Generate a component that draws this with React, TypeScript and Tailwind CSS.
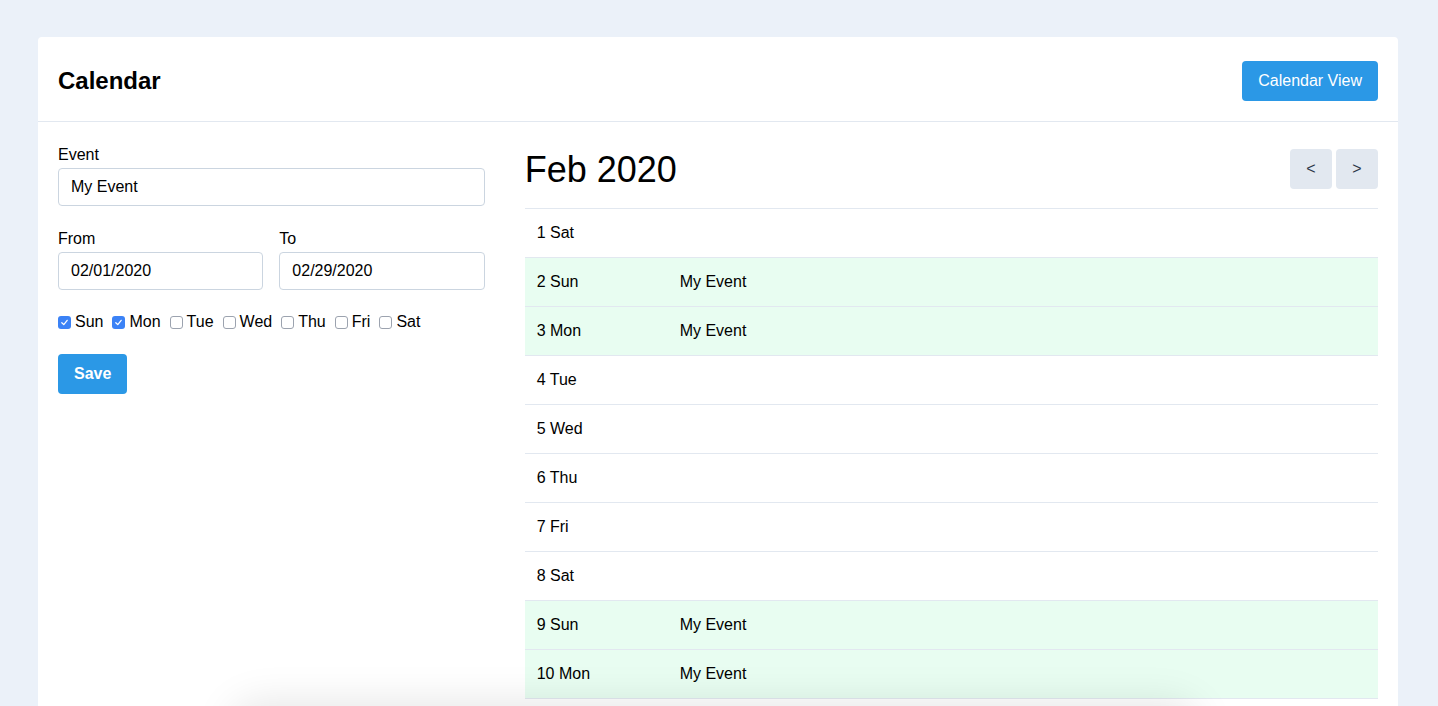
import React from "react";

const days = [
  { d: "1 Sat", e: "" },
  { d: "2 Sun", e: "My Event" },
  { d: "3 Mon", e: "My Event" },
  { d: "4 Tue", e: "" },
  { d: "5 Wed", e: "" },
  { d: "6 Thu", e: "" },
  { d: "7 Fri", e: "" },
  { d: "8 Sat", e: "" },
  { d: "9 Sun", e: "My Event" },
  { d: "10 Mon", e: "My Event" },
  { d: "11 Tue", e: "" },
];

const week = [
  { n: "Sun", c: true },
  { n: "Mon", c: true },
  { n: "Tue", c: false },
  { n: "Wed", c: false },
  { n: "Thu", c: false },
  { n: "Fri", c: false },
  { n: "Sat", c: false },
];

function Check({ checked }: { checked: boolean }) {
  return checked ? (
    <span className="inline-flex h-[13px] w-[13px] items-center justify-center rounded-[3px] bg-[#3b82f6]">
      <svg width="9" height="9" viewBox="0 0 10 10">
        <path d="M2 5.2 L4.2 7.4 L8 2.6" fill="none" stroke="white" strokeWidth="1.4" strokeLinecap="round" strokeLinejoin="round" />
      </svg>
    </span>
  ) : (
    <span className="inline-block h-[13px] w-[13px] rounded-[3px] border border-[#9ca3af] bg-white" />
  );
}

export default function App() {
  return (
    <div
      className="relative min-h-[706px] overflow-hidden bg-[#ebf1f9] pt-[37px] text-black"
      style={{ fontFamily: "'Liberation Sans', Arial, sans-serif" }}
    >
      <div className="ml-[38px] w-[1360px] rounded-[4px] bg-white">
        <div className="flex items-center justify-between border-b border-[#e2e8f0] px-5 pb-5 pt-6">
          <h1 className="text-[24px] font-bold leading-[32px]">Calendar</h1>
          <button className="h-10 rounded-[4px] bg-[#2b98e6] px-4 text-[16px] text-white">
            Calendar View
          </button>
        </div>
        <div className="grid grid-cols-[1fr_2fr] gap-10 px-5 pt-[21px]">
          <div>
            <label className="block text-[16px] leading-[24px]">Event</label>
            <div className="mt-[1px] flex h-[38px] items-center rounded-[4px] border border-[#cbd5e0] px-3 text-[16px]">
              My Event
            </div>
            <div className="mt-[21px] grid grid-cols-2 gap-4">
              <div>
                <label className="block text-[16px] leading-[24px]">From</label>
                <div className="mt-[1px] flex h-[38px] items-center rounded-[4px] border border-[#cbd5e0] px-3 text-[16px]">
                  02/01/2020
                </div>
              </div>
              <div>
                <label className="block text-[16px] leading-[24px]">To</label>
                <div className="mt-[1px] flex h-[38px] items-center rounded-[4px] border border-[#cbd5e0] px-3 text-[16px]">
                  02/29/2020
                </div>
              </div>
            </div>
            <div className="mt-5 flex items-center gap-[9px] text-[16px] leading-[24px]">
              {week.map((w) => (
                <span key={w.n} className="flex items-center gap-[4px]">
                  <Check checked={w.c} />
                  <span>{w.n}</span>
                </span>
              ))}
            </div>
            <button className="mt-5 h-10 rounded-[4px] bg-[#2b98e6] px-4 text-[16px] font-bold text-white">
              Save
            </button>
          </div>
          <div className="pt-[6px]">
            <div className="flex items-start justify-between">
              <h2 className="mt-[1px] text-[36px] leading-[40px]">Feb 2020</h2>
              <div className="flex gap-1">
                <button className="h-10 w-[42px] rounded-[4px] bg-[#e2e8f0] text-[16px] text-[#2d3748]">&lt;</button>
                <button className="h-10 w-[42px] rounded-[4px] bg-[#e2e8f0] text-[16px] text-[#2d3748]">&gt;</button>
              </div>
            </div>
            <div className="mt-[18px] border-t border-[#e2e8f0]">
              {days.map((r) => (
                <div
                  key={r.d}
                  className={`flex border-b border-[#e2e8f0] text-[16px] leading-[24px] ${r.e ? "bg-[#e8fdf1]" : "bg-white"}`}
                >
                  <div className="w-[155px] px-3 py-3">{r.d}</div>
                  <div className="py-3">{r.e}</div>
                </div>
              ))}
            </div>
          </div>
        </div>
      </div>
      <div className="pointer-events-none fixed left-[230px] top-[712px] h-[60px] w-[970px] rounded-[30px] bg-white shadow-[0_-10px_40px_rgba(0,0,0,0.10)]" />
    </div>
  );
}
